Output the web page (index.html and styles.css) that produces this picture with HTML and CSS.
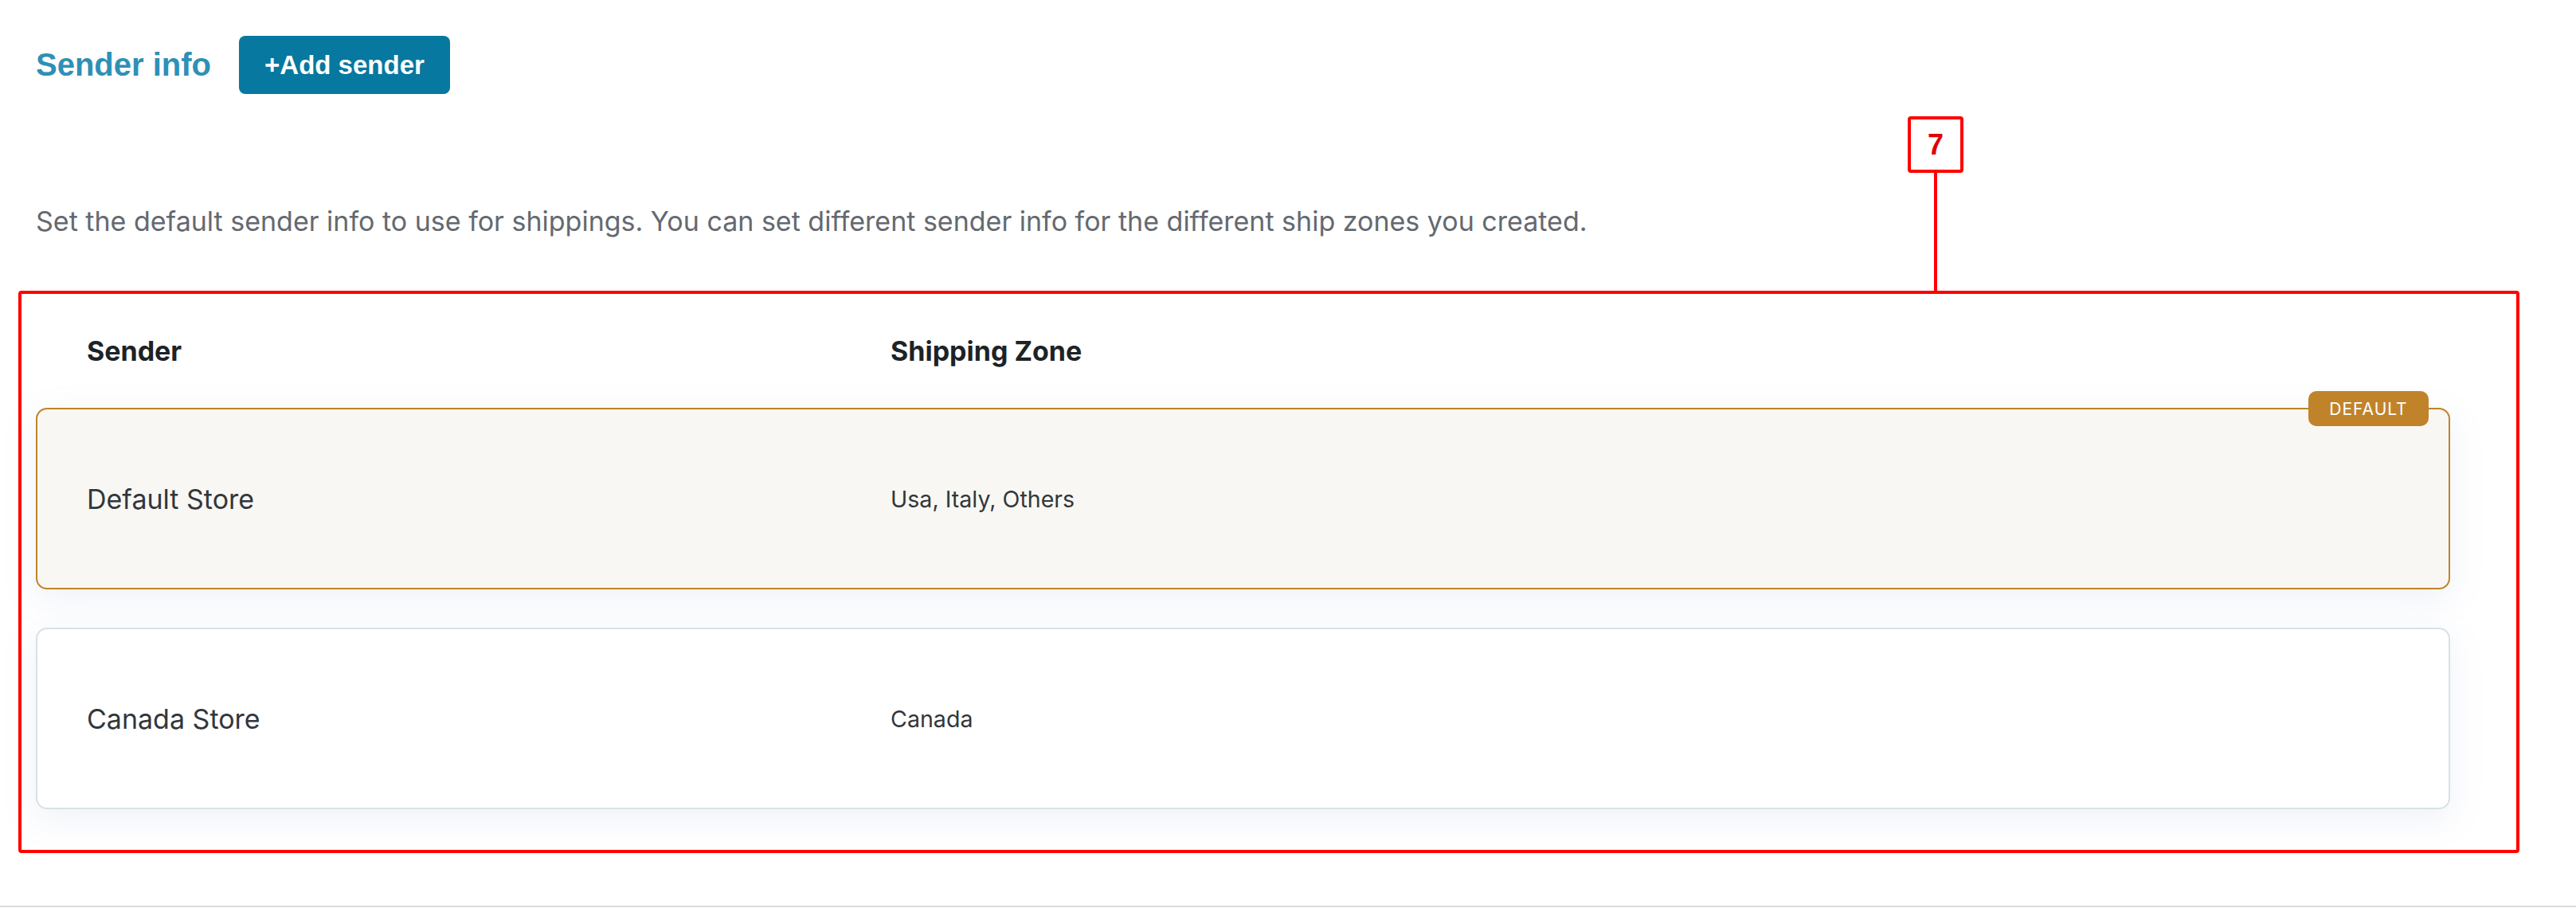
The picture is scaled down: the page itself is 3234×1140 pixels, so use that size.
FILE: index.html
```html
<!DOCTYPE html>
<html lang="en">
  <head>
    <meta charset="UTF-8" />
    <meta name="viewport" content="width=device-width, initial-scale=1.0" />
    <title>Sender info</title>
    <link rel="stylesheet" href="styles.css">
  </head>
  <body>
    <div class="page-head">
      <h2 class="page-title">Sender info</h2>
      <button type="button" class="btn">+Add sender</button>
    </div>

    <p class="description">Set the default sender info to use for shippings. You can set different sender info for the different ship zones you created.</p>

    <div class="senders">
      <div class="marker">7</div>

      <div class="senders-head">
        <span>Sender</span>
        <span>Shipping Zone</span>
      </div>

      <div class="sender-card is-default">
        <span class="badge">DEFAULT</span>
        <span class="sender-name">Default Store</span>
        <span class="sender-zone">Usa, Italy, Others</span>
      </div>

      <div class="sender-card">
        <span class="sender-name">Canada Store</span>
        <span class="sender-zone">Canada</span>
      </div>
    </div>

    <div class="page-foot"></div>
  </body>
</html>
```

FILE: styles.css
```css
body {
  margin: 0;
  padding: 0;
  background: #ffffff;
  font-family: Inter, "Noto Sans", sans-serif;
  color: #1d2327;
}

.page-head {
  display: flex;
  align-items: center;
  gap: 35px;
  padding: 45px 0 0 45px;
}

.page-title {
  margin: 0;
  font-family: "Liberation Sans", Arial, sans-serif;
  font-size: 40px;
  font-weight: 700;
  color: #2e90b6;
}

.btn {
  height: 73px;
  padding: 0 32px;
  background-color: #07789f;
  border: none;
  border-radius: 8px;
  color: #fff;
  font-family: "Liberation Sans", Arial, sans-serif;
  font-size: 33px;
  font-weight: 700;
  cursor: pointer;
}

.description {
  margin: 137px 0 0 45px;
  font-size: 34px;
  line-height: 46px;
  color: #646970;
}

.senders {
  position: relative;
  margin: 64px 0 0 23px;
  width: 3140px;
  box-sizing: border-box;
  padding: 0 83px 51px 18px;
  border: 4px solid #ff0000;
  border-radius: 4px;
}

.marker {
  position: absolute;
  top: -223px;
  left: 2368px;
  width: 62px;
  height: 63px;
  border: 4px solid #ff0000;
  border-radius: 4px;
  display: flex;
  align-items: center;
  justify-content: center;
  font-family: "Liberation Sans", Arial, sans-serif;
  font-size: 36px;
  font-weight: 700;
  color: #e00000;
}

.marker::after {
  content: "";
  position: absolute;
  top: 67px;
  left: 29px;
  width: 4px;
  height: 148px;
  background: #ff0000;
}

.senders-head {
  display: grid;
  grid-template-columns: 1009px 1fr;
  align-items: center;
  height: 143px;
  padding-left: 64px;
  font-size: 34px;
  font-weight: 700;
  color: #1d2327;
}

.sender-card {
  position: relative;
  display: grid;
  grid-template-columns: 1009px 1fr;
  align-items: center;
  height: 228px;
  box-sizing: border-box;
  padding-left: 62px;
  background: #ffffff;
  border: 2px solid #d6e2e6;
  border-radius: 14px;
  box-shadow: 0 12px 44px rgba(120, 150, 200, 0.13);
}

.sender-card + .sender-card {
  margin-top: 48px;
}

.sender-card.is-default {
  background: #f9f7f3;
  border-color: #c1832a;
}

.sender-name {
  font-size: 34px;
  color: #32373c;
}

.sender-zone {
  font-size: 28.6px;
  color: #32373c;
}

.badge {
  position: absolute;
  top: -23px;
  right: 25px;
  width: 151px;
  height: 44px;
  display: flex;
  align-items: center;
  justify-content: center;
  background: #c1832a;
  border-radius: 10px;
  color: #fff;
  font-size: 21px;
  letter-spacing: 1px;
}

.page-foot {
  margin-top: 66px;
  border-top: 2px solid #dcdcde;
}
```
